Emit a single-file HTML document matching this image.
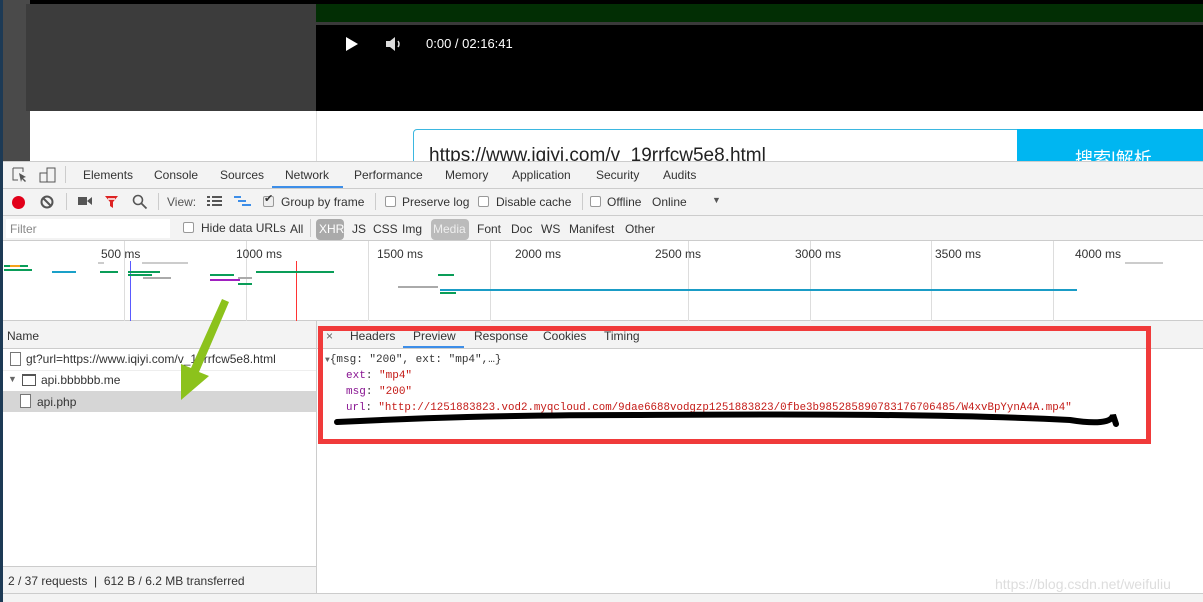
<!DOCTYPE html>
<html><head><meta charset="utf-8"><style>
*{margin:0;padding:0;box-sizing:border-box}
body{width:1203px;height:602px;overflow:hidden;position:relative;background:#fff;font-family:"Liberation Sans","Noto Sans CJK SC",sans-serif;font-size:12px;color:#333}
.a{position:absolute}
.t{position:absolute;white-space:nowrap;font-size:12px;color:#333}
.m{font-family:"Liberation Mono","DejaVu Sans Mono",monospace;font-size:11px}
.cb{position:absolute;width:11px;height:11px;border:1px solid #999;border-radius:2px;background:#fff}
</style></head><body>
<div class="a" style="left:0;top:0;width:1203px;height:4px;background:#000"></div>
<div class="a" style="left:0;top:0;width:30px;height:161px;background:#4a4a4a"></div>
<div class="a" style="left:0;top:0;width:3px;height:602px;background:#1d3a55"></div>
<div class="a" style="left:26px;top:4px;width:290px;height:107px;background:#3c3c3c"></div>
<div class="a" style="left:316px;top:4px;width:887px;height:18px;background:#022e04"></div>
<div class="a" style="left:316px;top:22px;width:887px;height:3px;background:#3a3a3a"></div>
<div class="a" style="left:316px;top:25px;width:887px;height:86px;background:#000"></div>
<svg class="a" style="left:344px;top:36px" width="16" height="16"><path d="M2 1 L14 8 L2 15Z" fill="#fff"/></svg>
<svg class="a" style="left:385px;top:36px" width="18" height="16"><path d="M1 5h4l5-4v14l-5-4H1z" fill="#ddd"/><path d="M13 5q2 3 0 6" stroke="#ddd" fill="none" stroke-width="1.5"/></svg>
<div class="t" style="left:426px;top:36px;color:#fff;font-size:13px">0:00 / 02:16:41</div>
<div class="a" style="left:316px;top:111px;width:1px;height:50px;background:#e0e0e0"></div>
<div class="a" style="left:413px;top:129px;width:610px;height:40px;border:1px solid #3bb7e0;border-radius:4px 0 0 0"></div>
<div class="t" style="left:429px;top:145px;font-size:19px;color:#222">https://www.iqiyi.com/v_19rrfcw5e8.html</div>
<div class="a" style="left:1017px;top:129px;width:186px;height:40px;background:#00b6f1"></div>
<div class="t" style="left:1075px;top:145px;font-size:18px;color:#fff">搜索|解析</div>
<div class="a" style="left:3px;top:161px;width:1200px;height:441px;background:#fff"></div>
<div class="a" style="left:3px;top:161px;width:1200px;height:80px;background:#f3f3f3"></div>
<div class="a" style="left:3px;top:161px;width:1200px;height:1px;background:#ccc"></div>
<div class="a" style="left:3px;top:188px;width:1200px;height:1px;background:#ccc"></div>
<div class="a" style="left:3px;top:215px;width:1200px;height:1px;background:#ccc"></div>
<div class="a" style="left:3px;top:240px;width:1200px;height:1px;background:#ccc"></div>
<svg class="a" style="left:12px;top:167px" width="44" height="16"><path d="M1 1h10v4M1 1v12h5" stroke="#555" fill="none"/><path d="M7 6l7 4-3 1 3 3-1 1-3-3-1 3z" fill="#555"/><rect x="35" y="1" width="8" height="14" stroke="#555" fill="none"/><rect x="28" y="6" width="7" height="9" stroke="#555" fill="none"/></svg>
<div class="a" style="left:65px;top:166px;width:1px;height:17px;background:#ccc"></div>
<div class="t" style="left:83px;top:168px">Elements</div>
<div class="t" style="left:154px;top:168px">Console</div>
<div class="t" style="left:220px;top:168px">Sources</div>
<div class="t" style="left:285px;top:168px">Network</div>
<div class="a" style="left:272px;top:186px;width:71px;height:2px;background:#3d8ee8"></div>
<div class="t" style="left:354px;top:168px">Performance</div>
<div class="t" style="left:445px;top:168px">Memory</div>
<div class="t" style="left:512px;top:168px">Application</div>
<div class="t" style="left:596px;top:168px">Security</div>
<div class="t" style="left:663px;top:168px">Audits</div>
<div class="a" style="left:12px;top:196px;width:13px;height:13px;border-radius:50%;background:#e2001a"></div>
<svg class="a" style="left:40px;top:195px" width="14" height="14"><circle cx="7" cy="7" r="5.5" stroke="#555" stroke-width="2" fill="none"/><path d="M3 3l8 8" stroke="#555" stroke-width="2"/></svg>
<div class="a" style="left:66px;top:193px;width:1px;height:17px;background:#ccc"></div>
<svg class="a" style="left:78px;top:196px" width="14" height="10"><rect x="0" y="1" width="9" height="8" fill="#555"/><path d="M9 5l5-4v8z" fill="#555"/></svg>
<svg class="a" style="left:104px;top:195px" width="15" height="14"><path d="M1 1h13l-5 6v6l-3-2v-4z" fill="#d22" /><path d="M4 4h7" stroke="#fff" stroke-width="1.5"/></svg>
<svg class="a" style="left:132px;top:194px" width="16" height="16"><circle cx="6" cy="6" r="4.5" stroke="#555" stroke-width="1.6" fill="none"/><path d="M9.5 9.5l5 5" stroke="#555" stroke-width="1.8"/></svg>
<div class="a" style="left:158px;top:193px;width:1px;height:17px;background:#ccc"></div>
<div class="t" style="left:167px;top:195px;color:#555">View:</div>
<svg class="a" style="left:207px;top:196px" width="16" height="11"><path d="M0 1h3M5 1h10M0 5h3M5 5h10M0 9h3M5 9h10" stroke="#555" stroke-width="2"/></svg>
<svg class="a" style="left:234px;top:196px" width="18" height="11"><path d="M0 1h7M4 5h8M8 9h9" stroke="#3d8ee8" stroke-width="2"/></svg>
<div class="cb" style="left:263px;top:196px;background:#eee"></div><div class="t" style="left:264px;top:192px;font-size:11px">✔</div>
<div class="t" style="left:281px;top:195px">Group by frame</div>
<div class="a" style="left:375px;top:193px;width:1px;height:17px;background:#ccc"></div>
<div class="cb" style="left:385px;top:196px"></div><div class="t" style="left:402px;top:195px">Preserve log</div>
<div class="cb" style="left:478px;top:196px"></div><div class="t" style="left:496px;top:195px">Disable cache</div>
<div class="a" style="left:582px;top:193px;width:1px;height:17px;background:#ccc"></div>
<div class="cb" style="left:590px;top:196px"></div><div class="t" style="left:607px;top:195px">Offline</div>
<div class="t" style="left:652px;top:195px">Online</div>
<div class="t" style="left:712px;top:195px;font-size:9px;color:#555">▼</div>
<div class="a" style="left:6px;top:219px;width:164px;height:19px;background:#fff"></div>
<div class="t" style="left:10px;top:222px;color:#888">Filter</div>
<div class="cb" style="left:183px;top:222px"></div>
<div class="t" style="left:201px;top:221px">Hide data URLs</div>
<div class="t" style="left:290px;top:222px">All</div>
<div class="a" style="left:310px;top:219px;width:1px;height:18px;background:#ccc"></div>
<div class="a" style="left:316px;top:219px;width:28px;height:21px;background:#aaa;border-radius:4px"></div>
<div class="t" style="left:319px;top:222px;color:#fff">XHR</div>
<div class="t" style="left:352px;top:222px">JS</div>
<div class="t" style="left:373px;top:222px">CSS</div>
<div class="t" style="left:402px;top:222px">Img</div>
<div class="a" style="left:431px;top:219px;width:38px;height:21px;background:#bbb;border-radius:4px"></div>
<div class="t" style="left:433px;top:222px;color:#eee">Media</div>
<div class="t" style="left:477px;top:222px">Font</div>
<div class="t" style="left:511px;top:222px">Doc</div>
<div class="t" style="left:541px;top:222px">WS</div>
<div class="t" style="left:569px;top:222px">Manifest</div>
<div class="t" style="left:625px;top:222px">Other</div>
<div class="a" style="left:3px;top:320px;width:1200px;height:1px;background:#ccc"></div>
<div class="a" style="left:124px;top:241px;width:1px;height:80px;background:#ddd"></div>
<div class="a" style="left:246px;top:241px;width:1px;height:80px;background:#ddd"></div>
<div class="a" style="left:368px;top:241px;width:1px;height:80px;background:#ddd"></div>
<div class="a" style="left:490px;top:241px;width:1px;height:80px;background:#ddd"></div>
<div class="a" style="left:688px;top:241px;width:1px;height:80px;background:#ddd"></div>
<div class="a" style="left:810px;top:241px;width:1px;height:80px;background:#ddd"></div>
<div class="a" style="left:931px;top:241px;width:1px;height:80px;background:#ddd"></div>
<div class="a" style="left:1053px;top:241px;width:1px;height:80px;background:#ddd"></div>
<div class="t" style="left:101px;top:247px">500 ms</div>
<div class="t" style="left:236px;top:247px">1000 ms</div>
<div class="t" style="left:377px;top:247px">1500 ms</div>
<div class="t" style="left:515px;top:247px">2000 ms</div>
<div class="t" style="left:655px;top:247px">2500 ms</div>
<div class="t" style="left:795px;top:247px">3000 ms</div>
<div class="t" style="left:935px;top:247px">3500 ms</div>
<div class="t" style="left:1075px;top:247px">4000 ms</div>
<div class="a" style="left:1125px;top:262px;width:38px;height:2px;background:#ccc"></div>
<div class="a" style="left:130px;top:261px;width:1px;height:60px;background:#5a5aff"></div>
<div class="a" style="left:296px;top:261px;width:1px;height:60px;background:#f33"></div>
<div class="a" style="left:4px;top:265px;width:24px;height:2px;background:#0a9d58"></div>
<div class="a" style="left:10px;top:265px;width:10px;height:2px;background:#f4a31b"></div>
<div class="a" style="left:4px;top:269px;width:28px;height:2px;background:#0a9d58"></div>
<div class="a" style="left:52px;top:271px;width:24px;height:2px;background:#1aa0c8"></div>
<div class="a" style="left:98px;top:262px;width:6px;height:2px;background:#ccc"></div>
<div class="a" style="left:100px;top:271px;width:18px;height:2px;background:#0a9d58"></div>
<div class="a" style="left:142px;top:262px;width:46px;height:2px;background:#ccc"></div>
<div class="a" style="left:128px;top:271px;width:32px;height:2px;background:#0a9d58"></div>
<div class="a" style="left:128px;top:274px;width:24px;height:2px;background:#0a9d58"></div>
<div class="a" style="left:143px;top:277px;width:28px;height:2px;background:#aaa"></div>
<div class="a" style="left:210px;top:274px;width:24px;height:2px;background:#0a9d58"></div>
<div class="a" style="left:210px;top:279px;width:30px;height:2px;background:#a020c0"></div>
<div class="a" style="left:238px;top:277px;width:14px;height:2px;background:#aaa"></div>
<div class="a" style="left:238px;top:283px;width:14px;height:2px;background:#0a9d58"></div>
<div class="a" style="left:256px;top:271px;width:78px;height:2px;background:#0a9d58"></div>
<div class="a" style="left:398px;top:286px;width:40px;height:2px;background:#aaa"></div>
<div class="a" style="left:438px;top:274px;width:16px;height:2px;background:#0a9d58"></div>
<div class="a" style="left:440px;top:289px;width:637px;height:2px;background:#1a9cc6"></div>
<div class="a" style="left:440px;top:292px;width:16px;height:2px;background:#0a9d58"></div>
<div class="a" style="left:316px;top:321px;width:1px;height:273px;background:#ccc"></div>
<div class="a" style="left:3px;top:321px;width:313px;height:27px;background:#f3f3f3"></div>
<div class="a" style="left:3px;top:348px;width:1200px;height:1px;background:#ccc"></div>
<div class="t" style="left:7px;top:329px">Name</div>
<div class="a" style="left:10px;top:352px;width:11px;height:14px;border:1px solid #777"></div>
<div class="t" style="left:26px;top:352px">gt?url=https://www.iqiyi.com/v_19rrfcw5e8.html</div>
<div class="a" style="left:3px;top:370px;width:313px;height:1px;background:#eee"></div>
<div class="t" style="left:8px;top:374px;font-size:9px;color:#666">▼</div>
<div class="a" style="left:22px;top:374px;width:14px;height:12px;border:1px solid #555;border-top-width:2px"></div>
<div class="t" style="left:41px;top:373px">api.bbbbbb.me</div>
<div class="a" style="left:3px;top:391px;width:313px;height:21px;background:#d6d6d6"></div>
<div class="a" style="left:20px;top:394px;width:11px;height:14px;border:1px solid #777;background:#fff"></div>
<div class="t" style="left:37px;top:395px">api.php</div>
<div class="a" style="left:3px;top:566px;width:313px;height:28px;background:#f3f3f3;border-top:1px solid #ccc"></div>
<div class="t" style="left:8px;top:574px">2 / 37 requests &nbsp;|&nbsp; 612 B / 6.2 MB transferred</div>
<div class="a" style="left:3px;top:593px;width:1200px;height:9px;background:#f3f3f3;border-top:1px solid #ccc"></div>
<div class="a" style="left:317px;top:321px;width:886px;height:27px;background:#f3f3f3"></div>
<div class="t" style="left:326px;top:329px;color:#666">×</div>
<div class="t" style="left:350px;top:329px">Headers</div>
<div class="t" style="left:413px;top:329px">Preview</div>
<div class="a" style="left:403px;top:346px;width:61px;height:2px;background:#3d8ee8"></div>
<div class="t" style="left:474px;top:329px">Response</div>
<div class="t" style="left:543px;top:329px">Cookies</div>
<div class="t" style="left:604px;top:329px">Timing</div>
<div class="t m" style="left:325px;top:354px"><span style="font-size:8px;color:#666">▼</span>{msg: "200", ext: "mp4",…}</div>
<div class="t m" style="left:346px;top:370px"><span style="color:#881391">ext</span>: <span style="color:#c41a16">"mp4"</span></div>
<div class="t m" style="left:346px;top:386px"><span style="color:#881391">msg</span>: <span style="color:#c41a16">"200"</span></div>
<div class="t m" style="left:346px;top:402px;font-size:10.8px"><span style="color:#881391">url</span>: <span style="color:#c41a16">"http://1251883823.vod2.myqcloud.com/9dae6688vodgzp1251883823/0fbe3b985285890783176706485/W4xvBpYynA4A.mp4"</span></div>
<div class="a" style="left:318px;top:326px;width:833px;height:118px;border:5px solid #f03a3a"></div>
<svg class="a" style="left:0;top:0" width="1203" height="602">
<path d="M337 422 C420 418 500 415 640 415 C800 414 950 414 1070 420 C1095 424 1112 423 1113 415 L1116 424" stroke="#000" stroke-width="6" fill="none" stroke-linecap="round"/>
<path d="M229 302 L199 372 L209 376 L181 400 L181 364 L191 368 L222 299Z" fill="#8cc21c"/>
</svg>
<div class="t" style="left:995px;top:576px;color:#ddd;font-size:14px">https://blog.csdn.net/weifuliu</div>
</body></html>
